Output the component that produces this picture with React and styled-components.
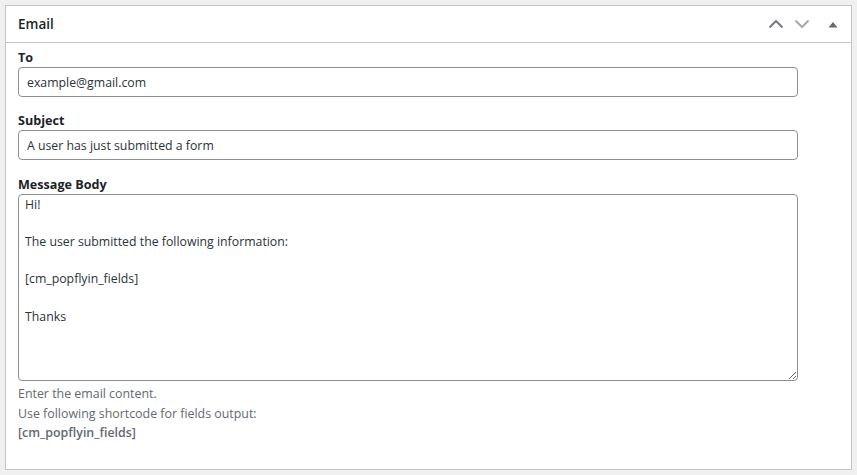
import React from "react";
import styled, { createGlobalStyle } from "styled-components";

const Global = createGlobalStyle`
  html, body {
    margin: 0;
    padding: 0;
    background: #f0f0f1;
  }
  body {
    font-family: "Open Sans", "Noto Sans", sans-serif;
    color: #3c434a;
  }
  #root {
    padding: 5px;
  }
`;

const Postbox = styled.div`
  background: #fff;
  border: 1px solid #c3c4c7;
  box-sizing: border-box;
  height: 465px;
`;

const Header = styled.div`
  display: flex;
  align-items: center;
  height: 36px;
  border-bottom: 1px solid #c3c4c7;
  padding-left: 12px;
`;

const Title = styled.h2`
  flex: 1;
  margin: 0;
  font-size: 13.5px;
  font-weight: 600;
  color: #1d2327;
`;

const Actions = styled.div`
  display: flex;
  height: 100%;
`;

const HandleButton = styled.button`
  width: ${(p) => (p.$wide ? "36px" : "26px")};
  height: 100%;
  padding: 0;
  border: 0;
  background: none;
  display: flex;
  align-items: center;
  justify-content: center;
  color: ${(p) => p.$color};
`;

const Inside = styled.div`
  padding: 5px 12px 12px;
`;

const Field = styled.div`
  margin-bottom: ${(p) => p.$gap || "14px"};
`;

const Label = styled.label`
  display: block;
  font-size: 12.6px;
  line-height: 19px;
  font-weight: 700;
  color: #1d2327;
`;

const TextInput = styled.input`
  box-sizing: border-box;
  display: block;
  width: 95%;
  height: 30px;
  padding: 0 8px;
  border: 1px solid #8c8f94;
  border-radius: 4px;
  font-family: inherit;
  font-size: 12.3px;
  color: #2c3338;
  outline: none;
`;

const Body = styled.textarea`
  box-sizing: border-box;
  display: block;
  width: 95%;
  height: 187px;
  padding: 1px 6px;
  border: 1px solid #8c8f94;
  border-radius: 4px;
  font-family: inherit;
  font-size: 12.3px;
  line-height: 18.6px;
  color: #2c3338;
  outline: none;
  resize: both;
`;

const Description = styled.p`
  margin: ${(p) => (p.$first ? "3px" : "0")} 0 0;
  font-size: 12.4px;
  line-height: 19.5px;
  color: #646970;

  strong {
    font-weight: 600;
  }
`;

const Chevron = ({ up }) => (
  <svg width="16" height="10" viewBox="0 0 16 10">
    <polyline
      points={up ? "1.5,8.5 8,2 14.5,8.5" : "1.5,1.5 8,8 14.5,1.5"}
      fill="none"
      stroke="currentColor"
      strokeWidth="2"
    />
  </svg>
);

const Triangle = () => (
  <svg width="10" height="7" viewBox="0 0 10 7">
    <polygon points="0.5,6.5 5,1 9.5,6.5" fill="currentColor" />
  </svg>
);

const message = `Hi!

The user submitted the following information:

[cm_popflyin_fields]

Thanks`;

export default () => {
  return (
    <>
      <Global />
      <Postbox>
        <Header>
          <Title>Email</Title>
          <Actions>
            <HandleButton $color="#787c82">
              <Chevron up />
            </HandleButton>
            <HandleButton $color="#a7aaad">
              <Chevron />
            </HandleButton>
            <HandleButton $wide $color="#646970">
              <Triangle />
            </HandleButton>
          </Actions>
        </Header>
        <Inside>
          <Field>
            <Label>To</Label>
            <TextInput defaultValue="example@gmail.com" />
          </Field>
          <Field $gap="15px">
            <Label>Subject</Label>
            <TextInput defaultValue="A user has just submitted a form" />
          </Field>
          <div>
            <Label>Message Body</Label>
            <Body defaultValue={message} />
            <Description $first>Enter the email content.</Description>
            <Description>
              Use following shortcode for fields output:
              <br />
              <strong>[cm_popflyin_fields]</strong>
            </Description>
          </div>
        </Inside>
      </Postbox>
    </>
  );
};
